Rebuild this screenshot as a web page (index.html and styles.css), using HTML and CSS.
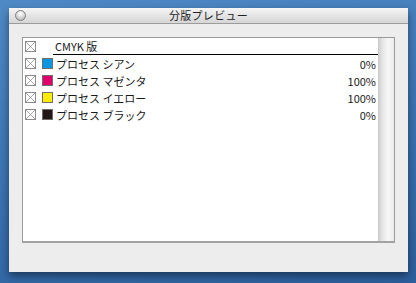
FILE: index.html
```html
<!DOCTYPE html>
<html lang="ja">
  <head>
    <meta charset="UTF-8" />
    <title>分版プレビュー</title>
    <link rel="stylesheet" href="styles.css">
  </head>
  <body>
    <!-- palette window -->
    <div class="window">
      <div class="titlebar">
        <div class="close-button"></div>
        <div class="title">分版プレビュー</div>
        <div></div>
      </div>
      <div class="content">
        <div class="list">
          <div class="rows">
            <div class="row header">
              <svg class="eye" viewBox="0 0 11 11"><rect x="0.5" y="0.5" width="10" height="10" /><path d="M1 1 L10 10 M10 1 L1 10" /></svg>
              <div class="header-label">CMYK 版</div>
            </div>
            <div class="row">
              <svg class="eye" viewBox="0 0 11 11"><rect x="0.5" y="0.5" width="10" height="10" /><path d="M1 1 L10 10 M10 1 L1 10" /></svg>
              <span class="swatch cyan"></span>
              <span class="name">プロセス シアン</span>
              <span class="percent">0%</span>
            </div>
            <div class="row">
              <svg class="eye" viewBox="0 0 11 11"><rect x="0.5" y="0.5" width="10" height="10" /><path d="M1 1 L10 10 M10 1 L1 10" /></svg>
              <span class="swatch magenta"></span>
              <span class="name">プロセス マゼンタ</span>
              <span class="percent">100%</span>
            </div>
            <div class="row">
              <svg class="eye" viewBox="0 0 11 11"><rect x="0.5" y="0.5" width="10" height="10" /><path d="M1 1 L10 10 M10 1 L1 10" /></svg>
              <span class="swatch yellow"></span>
              <span class="name">プロセス イエロー</span>
              <span class="percent">100%</span>
            </div>
            <div class="row">
              <svg class="eye" viewBox="0 0 11 11"><rect x="0.5" y="0.5" width="10" height="10" /><path d="M1 1 L10 10 M10 1 L1 10" /></svg>
              <span class="swatch black"></span>
              <span class="name">プロセス ブラック</span>
              <span class="percent">0%</span>
            </div>
          </div>
          <div class="scrollbar"></div>
        </div>
      </div>
    </div>
  </body>
</html>
```

FILE: styles.css
```css
* {
  margin: 0;
  padding: 0;
  box-sizing: border-box;
}
body {
  width: 416px;
  height: 283px;
  overflow: hidden;
  font-family: "Noto Sans CJK JP", "Noto Sans", sans-serif;
  font-size: 11px;
  color: #1a1a1a;
  background: linear-gradient(170deg, #4f8ac6 0%, #3d76b4 45%, #2d5f9d 100%);
}
.window {
  margin: 8px 0 0 9px;
  width: 399px;
  height: 264px;
  background-color: #ededed;
  box-shadow: 0 4px 8px rgba(0, 0, 0, 0.45);
}
.titlebar {
  height: 16px;
  display: grid;
  grid-template-columns: 1fr auto 1fr;
  align-items: center;
  background: linear-gradient(#f6f6f6, #e4e4e4 50%, #d6d6d6);
  border-bottom: 1px solid #9c9c9c;
}
.close-button {
  width: 11px;
  height: 11px;
  margin-left: 6px;
  border-radius: 50%;
  border: 1px solid #7d7d7d;
  background: radial-gradient(circle at 50% 30%, #ffffff 0%, #dcdcdc 45%, #a9a9a9 100%);
}
.title {
  color: #222;
  font-size: 11px;
  line-height: 15px;
  letter-spacing: 0.3px;
}
.content {
  padding: 13px 13px 0 13px;
}
.list {
  height: 206px;
  display: flex;
  background-color: #fff;
  border: 1px solid #9a9a9a;
  border-bottom: 2px solid #a2a2a2;
}
.rows {
  flex: 1;
}
.row {
  height: 17px;
  display: flex;
  align-items: center;
  padding-left: 2px;
  padding-right: 2px;
}
.eye {
  width: 11px;
  height: 11px;
  flex: none;
}
.eye rect {
  fill: #fff;
  stroke: #8c8c8c;
}
.eye path {
  stroke: #9a9a9a;
  stroke-width: 0.9;
}
.header {
  align-items: stretch;
  padding-right: 0;
}
.header .eye {
  align-self: center;
}
.header-label {
  flex: 1;
  margin-left: 17px;
  padding-left: 2px;
  line-height: 16px;
  border-bottom: 1px solid #000;
}
.swatch {
  width: 11px;
  height: 11px;
  margin-left: 6px;
  border: 1px solid #6e6e6e;
  flex: none;
}
.cyan {
  background-color: #0a96e0;
}
.magenta {
  background-color: #e2006c;
}
.yellow {
  background-color: #ffec00;
}
.black {
  background-color: #231815;
}
.name {
  margin-left: 3px;
  flex: 1;
}
.percent {
  text-align: right;
}
.scrollbar {
  width: 16px;
  background: linear-gradient(to right, #d2d2d2, #e6e6e6 25%, #f7f7f7 60%, #ececec);
  border-left: 1px solid #c8c8c8;
}
```
